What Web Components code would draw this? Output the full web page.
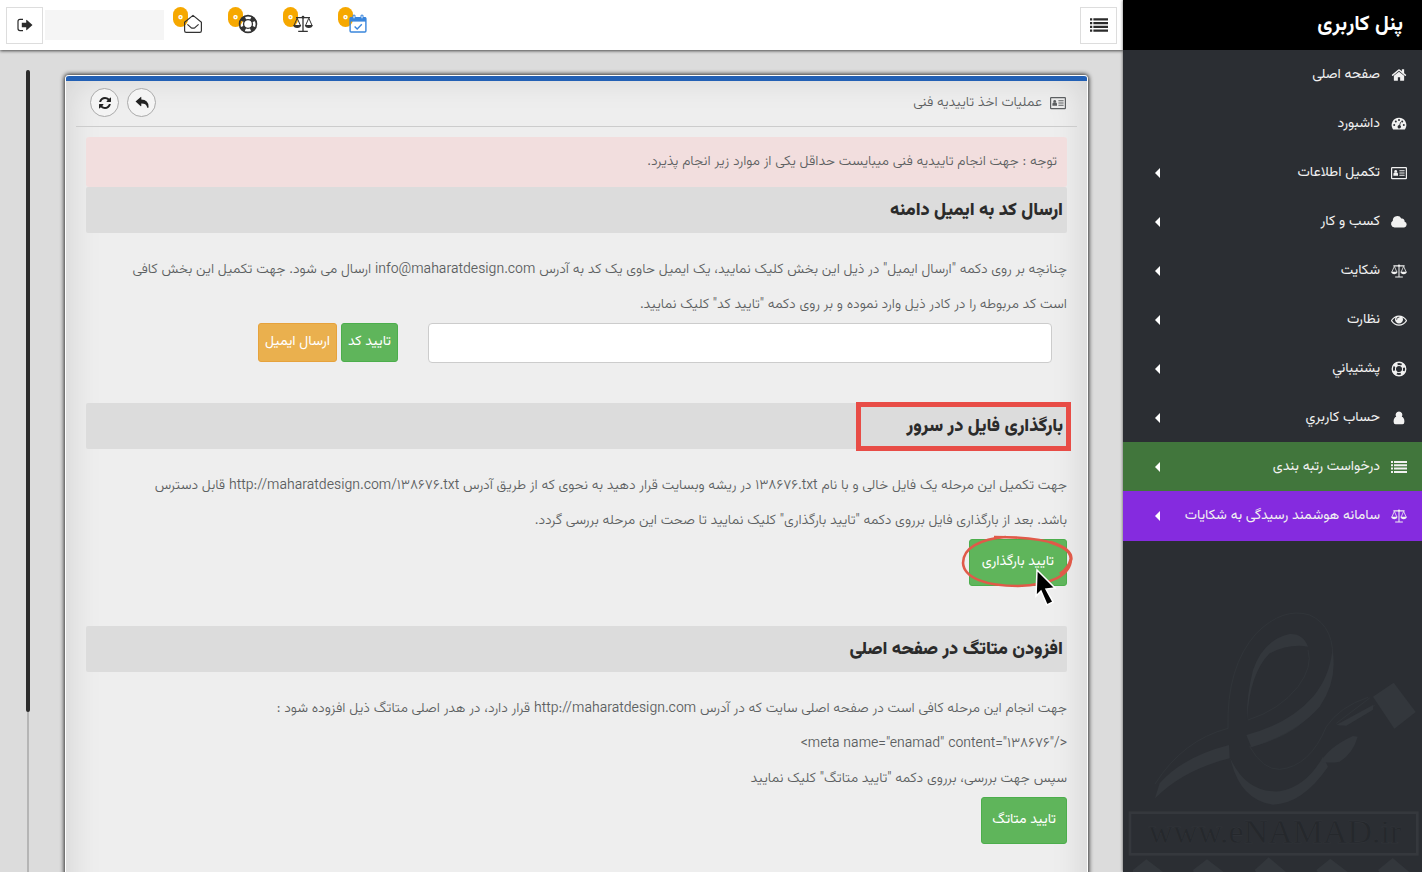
<!DOCTYPE html>
<html lang="fa" dir="rtl">
<head>
<meta charset="utf-8">
<meta name="viewport" content="width=device-width, initial-scale=1">
<title>پنل کاربری</title>
<style>
  html, body { height: 100%; }
  body {
    margin: 0;
    background: #dcdcdc;
    color: #5c5f61;
    font: 300 14px/20px Vazirmatn, Roboto, "DejaVu Sans", sans-serif;
  }
</style>
</head>
<body>
<panel-shell>
  <side-nav slot="nav" heading="پنل کاربری">
    <nav-item icon="home">صفحه اصلی</nav-item>
    <nav-item icon="gauge">داشبورد</nav-item>
    <nav-item icon="card" expandable>تکمیل اطلاعات</nav-item>
    <nav-item icon="cloud" expandable>کسب و کار</nav-item>
    <nav-item icon="scale" expandable>شکایت</nav-item>
    <nav-item icon="eye" expandable>نظارت</nav-item>
    <nav-item icon="ring" expandable>پشتيباني</nav-item>
    <nav-item icon="user" expandable>حساب كاربري</nav-item>
    <nav-item icon="list" expandable tone="green">درخواست رتبه بندی</nav-item>
    <nav-item icon="scale" expandable tone="violet">سامانه هوشمند رسیدگی به شکایات</nav-item>
  </side-nav>

  <top-bar slot="top">
    <top-counter icon="envelope" label="پیام ها">۰</top-counter>
    <top-counter icon="ring" label="پشتیبانی">۰</top-counter>
    <top-counter icon="scale" label="شکایات">۰</top-counter>
    <top-counter icon="calendar" label="تقویم" tone="blue">۰</top-counter>
  </top-bar>

  <content-card icon="card" heading="عملیات اخذ تاییدیه فنی">
    <notice-box>توجه : جهت انجام تاییدیه فنی میبایست حداقل یکی از موارد زیر انجام پذیرد.</notice-box>
    <card-section heading="ارسال کد به ایمیل دامنه">
      <text-block>چنانچه بر روی دکمه "ارسال ایمیل" در ذیل این بخش کلیک نمایید، یک ایمیل حاوی یک کد به آدرس <bdi dir="ltr">info@maharatdesign.com</bdi> ارسال می شود. جهت تکمیل این بخش کافی<br>است کد مربوطه را در کادر ذیل وارد نموده و بر روی دکمه "تایید کد" کلیک نمایید.</text-block>
      <code-form>
        <action-button compact>تایید کد</action-button>
        <action-button compact tone="amber">ارسال ایمیل</action-button>
      </code-form>
    </card-section>
    <card-section heading="بارگذاری فایل در سرور" marked>
      <text-block>جهت تکمیل این مرحله یک فایل خالی و با نام <bdi dir="ltr">۱۳۸۶۷۶.txt</bdi> در ریشه وبسایت قرار دهید به نحوی که از طریق آدرس <bdi dir="ltr">http://maharatdesign.com/۱۳۸۶۷۶.txt</bdi> قابل دسترس<br>باشد. بعد از بارگذاری فایل برروی دکمه "تایید بارگذاری" کلیک نمایید تا صحت این مرحله بررسی گردد.</text-block>
      <action-button circled>تایید بارگذاری</action-button>
    </card-section>
    <card-section heading="افزودن متاتگ در صفحه اصلی">
      <text-block>جهت انجام این مرحله کافی است در صفحه اصلی سایت که در آدرس <bdi dir="ltr">http://maharatdesign.com</bdi> قرار دارد، در هدر اصلی متاتگ ذیل افزوده شود :<br><bdi dir="ltr">&lt;meta name="enamad" content="۱۳۸۶۷۶"/&gt;</bdi><br>سپس جهت بررسی، برروی دکمه "تایید متاتگ" کلیک نمایید</text-block>
      <action-button>تایید متاتگ</action-button>
    </card-section>
  </content-card>
</panel-shell>

<script>
const ICONS = {
  home: ['0 0 1792 1792', '<path fill="currentColor" d="M1472 992v480q0 26-19 45t-45 19h-384v-384h-256v384h-384q-26 0-45-19t-19-45v-480l575-474 575 474q1 2 1 0zm223-69l-62 74q-8 9-21 11h-3q-13 0-21-7l-692-577-692 577q-12 8-24 7-13-2-21-11l-62-74q-8-10-7-23.500t11-21.500l719-599q32-26 76-26t76 26l244 204v-195q0-14 9-23t23-9h192q14 0 23 9t9 23v408l219 182q10 8 11 21.500t-7 23.500z"/>'],
  gauge: ['0 0 16 16', '<path fill="currentColor" fill-rule="evenodd" d="M8 1.800a7.300 7.300 0 0 0-6.200 11.200q.3.600.9.600h10.600q.6 0 .9-.6A7.300 7.300 0 0 0 8 1.800zM3.200 8a1 1 0 1 1 0 2 1 1 0 0 1 0-2zM4.800 4.600a1 1 0 1 1 0 2 1 1 0 0 1 0-2zM8 3a1 1 0 1 1 0 2 1 1 0 0 1 0-2zm4.800 5a1 1 0 1 1 0 2 1 1 0 0 1 0-2zm-1.600-3.400a1 1 0 1 1 0 2 1 1 0 0 1 0-2zM9.200 5.900l.7.200-.8 3.200a1.700 1.700 0 1 1-.8-.2z"/>'],
  card: ['0 0 16 16', '<rect x=".6" y="2.600" width="14.800" height="11" rx=".6" fill="none" stroke="currentColor" stroke-width="1.200"/><circle cx="4.700" cy="6.400" r="1.400" fill="currentColor"/><path fill="currentColor" d="M2.400 10.800V9q0-1.500 1-1.500h2.600q1 0 1 1.500v1.800zM8.400 5.300h5.200v1H8.400zM8.400 7.500h5.200v1H8.400zM8.400 9.700h5.200v1H8.400z"/>'],
  cloud: ['0 0 16 16', '<path fill="currentColor" d="M3.600 13.500A3.600 3.600 0 0 1 1.800 6.800 4.500 4.500 0 0 1 10.300 4.600a2.500 2.500 0 0 1 3.200 2.900 3.100 3.100 0 0 1-.3 6z"/>'],
  scale: ['0 0 20 18', '<g fill="none" stroke="currentColor"><path stroke-width="1.300" d="M3 2.600h14M10 2v14M5.200 16.400h9.600"/><path stroke-width="1" d="M4.200 3.200L1 10.400M4.200 3.200l3.200 7.200M15.800 3.200l-3.200 7.200M15.800 3.200l3.200 7.200"/></g><circle cx="10" cy="2.200" r="1.400" fill="currentColor"/><path fill="currentColor" d="M.2 10h8q-.4 3-4 3t-4-3zM11.800 10h8q-.4 3-4 3t-4-3z"/>'],
  eye: ['0 0 1792 1792', '<path fill="currentColor" d="M1664 960q-152-236-381-353 61 104 61 225 0 185-131.500 316.500t-316.500 131.500-316.500-131.500-131.500-316.500q0-121 61-225-229 117-381 353 133 205 333.500 326.500t434.500 121.500 434.500-121.500 333.500-326.500zm-720-384q0-20-14-34t-34-14q-125 0-214.500 89.500t-89.500 214.500q0 20 14 34t34 14 34-14 14-34q0-86 61-147t147-61q20 0 34-14t14-34zm848 384q0 34-20 69-140 230-376.500 368.500t-499.500 138.500-499.500-139-376.500-368q-20-35-20-69t20-69q140-229 376.500-368t499.500-139 499.500 139 376.500 368q20 35 20 69z"/>'],
  ring: ['0 0 18 18', '<g fill="none" stroke="currentColor"><circle cx="9" cy="9" r="7.600" stroke-width="1.500"/><circle cx="9" cy="9" r="4" stroke-width="1.200"/><circle cx="9" cy="9" r="6" stroke-width="4" stroke-dasharray="4.400 5.025" stroke-dashoffset="-2.500"/></g>'],
  user: ['0 0 16 16', '<path fill="currentColor" d="M8 1.400a3.400 3.400 0 0 1 2.800 5.300q2.600.8 2.600 5 0 2.500-2 2.500H4.600q-2 0-2-2.500 0-4.200 2.600-5A3.400 3.400 0 0 1 8 1.400z"/>'],
  list: ['0 0 16 14', '<path fill="currentColor" d="M0 1h2v2H0zM3 1h13v2H3zM0 4.300h2v2H0zM3 4.300h13v2H3zM0 7.600h2v2H0zM3 7.600h13v2H3zM0 10.900h2v2H0zM3 10.900h13v2H3z"/>'],
  exit: ['0 0 16 14', '<path fill="none" stroke="currentColor" stroke-width="1.200" d="M6 1.400H3Q1 1.400 1 3.400v7.200q0 2 2 2h3"/><path fill="currentColor" d="M4.800 4.700h4.400V2.200q0-.8.700-.3L15.500 7l-5.600 5.100q-.7.500-.7-.3V9.300H4.800z"/>'],
  envelope: ['0 0 20 20', '<path fill="none" stroke="currentColor" stroke-width="1.200" stroke-linejoin="round" d="M1.600 8.200L10 1.400l8.400 6.800v8.600q0 1.600-1.600 1.600H3.200q-1.600 0-1.600-1.600zM4.400 10.400l3.400 3q2.200 1.600 4.400 0l3.400-3"/>'],
  calendar: ['-1 0 20 20', '<rect x="1.100" y="3.600" width="15.800" height="14.400" rx="1" fill="none" stroke="currentColor" stroke-width="1.400"/><path fill="currentColor" d="M1 3.400h16v4.200H1z"/><path fill="#fff" stroke="currentColor" d="M4 1.200h2v3.600H4zM12 1.200h2v3.600h-2z"/><path fill="none" stroke="currentColor" stroke-width="1.400" d="M5.600 12.400l2.600 2.500 4.600-4.600"/>'],
  refresh: ['0 0 1792 1792', '<path fill="currentColor" d="M1639 1056q0 5-1 7-64 268-268 434.500t-478 166.500q-146 0-282.500-55t-243.500-157l-129 129q-19 19-45 19t-45-19-19-45v-448q0-26 19-45t45-19h448q26 0 45 19t19 45-19 45l-137 137q71 66 161 102t187 36q134 0 250-65t186-179q11-17 53-117 8-23 30-23h192q13 0 22.500 9.500t9.500 22.500zm25-800v448q0 26-19 45t-45 19h-448q-26 0-45-19t-19-45 19-45l138-138q-148-137-349-137-134 0-250 65t-186 179q-11 17-53 117-8 23-30 23h-199q-13 0-22.500-9.500t-9.500-22.500v-7q65-268 270-434.500t480-166.500q146 0 284 55.500t245 156.500l130-129q19-19 45-19t45 19 19 45z"/>'],
  reply: ['0 0 16 16', '<path fill="currentColor" d="M.6 6.200L6.600 1q.6-.4.600.4v2.500q8.300.3 8.300 8.300 0 1.400-.9 1.400-.5 0-.8-1-1-4-6.600-3.900v2.500q0 .8-.6.4z"/>'],
};

const define = (name, css, html) => {
  customElements.define(name, class extends HTMLElement {
    connectedCallback() {
      if (this.shadowRoot) return;
      const template = document.createElement('template');
      template.innerHTML = `<style>*{box-sizing:border-box}${css}</style>${typeof html === 'function' ? html(this) : html}`;
      this.attachShadow({ mode: 'open' }).append(template.content.cloneNode(true));
    }
  });
};

define('ui-icon', `
  :host { display: inline-flex; width: 16px; height: 16px; flex: none; }
  svg { width: 100%; height: 100%; overflow: visible; }`,
  el => { const [box, body] = ICONS[el.getAttribute('name')]; return `<svg viewBox="${box}" aria-hidden="true">${body}</svg>`; });

define('panel-shell', `
  :host { display: flex; height: 100vh; overflow: hidden; }
  .page { flex: 1; min-width: 0; display: flex; flex-direction: column; }
  main { flex: 1; min-height: 0; display: flex; gap: 35px; padding: 25px 35px 0 26px; }
  .body { flex: 1; min-width: 0; }
  .rail { width: 4px; margin-top: -5px; background: linear-gradient(#b5b5b5, #b5b5b5) center / 2px 100% no-repeat; }
  .thumb { height: 80%; border-radius: 2px; background: #2b2b2b; }`,
  `<slot name="nav"></slot>
   <div class="page"><slot name="top"></slot>
     <main><div class="body"><slot></slot></div><div class="rail"><div class="thumb"></div></div></main>
   </div>`);

define('side-nav', `
  :host { display: flex; flex-direction: column; width: 299px; flex: none; background: #2b2e33; box-shadow: 0 0 3px #0009; z-index: 1; }
  h1 { flex: none; margin: 0; height: 50px; padding-right: 19px; background: #000; color: #fff; font-size: 21px; font-weight: 700; line-height: 50px; }
  nav { flex: none; }
  svg { display: block; width: 100%; margin-top: auto; }`,
  el => `<h1>${el.getAttribute('heading')}</h1><nav><slot></slot></nav>
  <svg viewBox="0 0 897 846" direction="ltr">
    <g fill="none" stroke="#34383d" stroke-width="2">
      <path d="M96 582Q180 450 315 415Q310 230 400 130Q480 50 560 75Q640 110 628 230Q600 420 380 470Q420 540 470 538Q560 530 610 410Q650 350 735 322"/>
      <path d="M375 390Q470 360 525 290Q570 230 555 180"/>
      <path d="M640 400l100-76M650 406l105-60"/>
    </g>
    <g fill="#33373c">
      <path d="M96 625Q180 540 320 505L318 465Q180 500 110 580z"/>
      <path d="M372 390Q380 250 440 190Q500 160 555 170Q540 130 500 132Q420 150 390 240Q370 320 372 390z"/>
      <path d="M370 435Q500 400 570 320Q620 260 628 180Q645 270 590 350Q520 430 385 472z"/>
      <path d="M322 505Q370 610 470 604Q550 590 600 500L615 530Q540 640 450 644Q350 630 322 505z"/>
      <path d="M593 515Q620 470 690 438L704 440Q690 490 650 515Q620 520 593 515zM640 405l110-60v14l-80 48z"/>
      <path d="M750 320l62-42 66 88-64 50z"/>
      <path d="M30 840l40-32 50 38H30zM210 840l42-32 50 38h-90zM395 840l42-38 52 44h-90zM580 840l42-34 52 40h-90zM765 840l44-36 50 42h-90z"/>
    </g>
    <rect x="21" y="668" width="862" height="125" fill="none" stroke="#35383d" stroke-width="8"/>
    <text x="456" y="760" text-anchor="middle" font-family="Liberation Serif, serif" font-size="102" font-weight="400" fill="#25282c" stroke="#34373c" stroke-width="1">www.eNAMAD.ir</text>
  </svg>`);

define('nav-item', `
  :host { display: block; }
  a { display: flex; align-items: center; gap: 7px; height: 49px; padding: 0 11px 0 32px; color: #f1f1f1; text-decoration: none; font-weight: 400; }
  :host([tone=green]) a { background: #41763c; }
  :host([tone=violet]) a { background: #852bdf; height: 50px; }
  .icon { width: 24px; display: flex; justify-content: center; }
  .label { flex: 1; white-space: nowrap; }
  .caret { border: solid transparent; border-width: 5px 0; border-right: 5px solid #fff; }
  :host(:not([expandable])) .caret { display: none; }`,
  el => `<a href="#"><span class="icon"><ui-icon name="${el.getAttribute('icon')}"></ui-icon></span><span class="label"><slot></slot></span><span class="caret"></span></a>`);

define('top-bar', `
  :host { display: flex; align-items: center; flex: none; direction: ltr; height: 50px; padding: 0 6px; background: #fff; box-shadow: 0 1px 3px #000a; }
  button { width: 37px; height: 37px; padding: 0; display: grid; place-items: center; border: 1px solid #ddd; background: #fff; color: #2b2b2b; }
  .name { width: 119px; height: 30px; margin: 0 9px 0 2px; background: #f5f5f5; }
  .counters { flex: 1; display: flex; }
  .menu ui-icon { width: 18px; }`,
  `<button aria-label="خروج"><ui-icon name="exit"></ui-icon></button><div class="name"></div>
   <div class="counters"><slot></slot></div>
   <button class="menu" aria-label="منو"><ui-icon name="list"></ui-icon></button>`);

define('top-counter', `
  :host { display: block; width: 55px; color: #333; }
  :host([tone=blue]) { color: #3a86dc; }
  a { position: relative; display: flex; height: 36px; padding: 7px 0 0 10px; color: inherit; text-decoration: none; }
  ui-icon { width: 20px; height: 20px; position: relative; }
  .badge { position: absolute; left: 0; top: 0; width: 15px; height: 20px; border-radius: 8px; background: #f6a800; color: #fff; font-size: 13px; font-weight: 700; line-height: 20px; text-align: center; }`,
  el => `<a href="#" aria-label="${el.getAttribute('label')}"><span class="badge"><slot></slot></span><ui-icon name="${el.getAttribute('icon')}"></ui-icon></a>`);

define('content-card', `
  :host { display: block; min-height: 100vh; padding: 0 10px; border: 1px solid #fff; border-top: 0; border-radius: 4px 4px 0 0; background: #eee; box-shadow: 0 0 4px 1px #000c, inset 0 0 36px #0002; }
  .bar { height: 6px; margin: 0 -10px; background: #2260b5; border-top: 1px solid #fff; border-radius: 3px 3px 0 0; }
  header { display: flex; align-items: center; gap: 8px; height: 46px; padding: 0 11px 2px 14px; border-bottom: 1px solid #ccc; }
  h2 { flex: 1; margin: 0; font-size: 14px; font-weight: 300; line-height: 24px; }
  button { width: 29px; height: 29px; padding: 0; display: grid; place-items: center; border: 1px solid #aaa; border-radius: 50%; background: #f4f4f4; color: #222; }
  button ui-icon { width: 14px; height: 14px; }
  .content { padding: 10px 10px 30px; }`,
  el => `<div class="bar"></div><header><ui-icon name="${el.getAttribute('icon')}"></ui-icon><h2>${el.getAttribute('heading')}</h2>
   <button aria-label="بازگشت"><ui-icon name="reply"></ui-icon></button><button aria-label="بارگذاری مجدد"><ui-icon name="refresh"></ui-icon></button></header>
   <div class="content"><slot></slot></div>`);

define('notice-box', `
  :host { display: block; padding: 0 10px; border-radius: 3px; background: #f2dede; line-height: 50px; }`, `<slot></slot>`);

define('card-section', `
  :host { display: block; margin-bottom: 40px; }
  h3 { display: flex; margin: 0 0 20px; padding: 0 4px; height: 46px; border-radius: 2px; background: #dcdcdc; color: #2b2b2b; font-size: 18px; font-weight: 900; line-height: 48px; }
  span { position: relative; height: 46px; }
  :host([marked]) span::after { content: ""; position: absolute; inset: -1px -8px -2px -50px; border: 5px solid #e84c46; }`,
  el => `<h3><span>${el.getAttribute('heading')}</span></h3><slot></slot>`);

define('text-block', `:host { display: block; line-height: 35px; }`, `<slot></slot>`);

define('code-form', `
  :host { display: block; }
  form { display: flex; gap: 4px; }
  input { width: calc(100% * 2 / 3 - 30px); height: 40px; flex: none; padding: 0 12px; margin: 0 15px 0 26px; border: 1px solid #ccc; border-radius: 4px; background: #fff; font: inherit; }`,
  `<form><input type="text" aria-label="کد تایید"><slot></slot></form>`);

define('action-button', `
  :host { display: inline-flex; position: relative; vertical-align: top; }
  button { height: 47px; padding: 0 10px 2px; border: 1px solid #4cae4c; border-radius: 3px; background: #5fb55b; color: #fff; font: inherit; font-weight: 400; white-space: nowrap; }
  :host([compact]) button { height: 39px; padding: 0 6px 2px; }
  :host([circled]) button { padding: 0 12px 2px; }
  :host([tone=amber]) button { background: #eab04e; border-color: #e6a23c; }
  .mark { position: absolute; right: -7px; top: -3px; width: 112px; height: 70px; overflow: visible; pointer-events: none; }`,
  el => `<button type="button"><slot></slot></button>${el.hasAttribute('circled') ? `
   <svg class="mark" viewBox="0 0 112 70" aria-hidden="true">
     <path fill="none" stroke="#e05a49" stroke-width="2.600" d="M44 1C18 3 1 12 1 27 2 42 24 50 56 50 88 49 109 40 109 22 107 8 80 1 32 1"/>
     <path fill="none" stroke="#e05a49" stroke-width="3.200" d="M88 6Q110 13 109 23 107 32 98 38"/>
     <path fill="#000" stroke="#fff" stroke-width="1.500" d="M75 34l18 18-9 1 7 13-6 3-6-14-5 5z"/>
   </svg>` : ''}`);
</script>
</body>
</html>
